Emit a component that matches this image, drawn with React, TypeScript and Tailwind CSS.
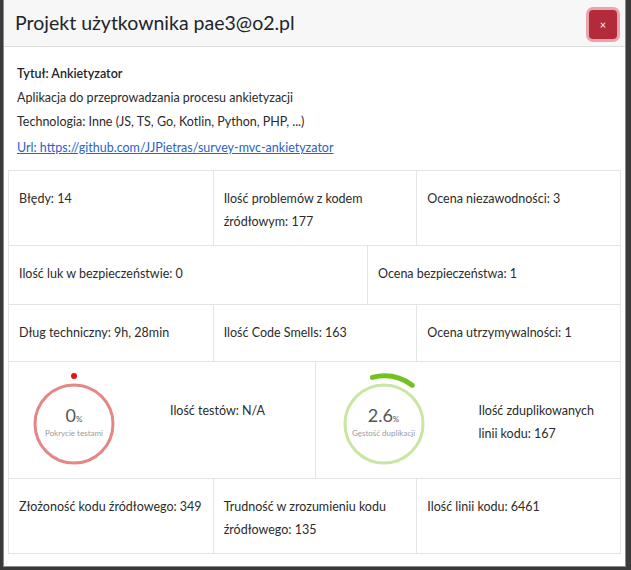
import React from "react";

type Cell = { text: string; w: string };

const rows: { h: string; cells: Cell[] }[] = [
  {
    h: "h-[75px]",
    cells: [
      { text: "Błędy: 14", w: "w-1/3" },
      { text: "Ilość problemów z kodem źródłowym: 177", w: "w-1/3" },
      { text: "Ocena niezawodności: 3", w: "w-1/3" },
    ],
  },
  {
    h: "h-[59px]",
    cells: [
      { text: "Ilość luk w bezpieczeństwie: 0", w: "w-[358px]" },
      { text: "Ocena bezpieczeństwa: 1", w: "flex-1" },
    ],
  },
  {
    h: "h-[57px]",
    cells: [
      { text: "Dług techniczny: 9h, 28min", w: "w-1/3" },
      { text: "Ilość Code Smells: 163", w: "w-1/3" },
      { text: "Ocena utrzymywalności: 1", w: "w-1/3" },
    ],
  },
];

const lastRow: Cell[] = [
  { text: "Złożoność kodu źródłowego: 349", w: "w-1/3" },
  { text: "Trudność w zrozumieniu kodu źródłowego: 135", w: "w-1/3" },
  { text: "Ilość linii kodu: 6461", w: "w-1/3" },
];

function Row({ h, cells }: { h: string; cells: Cell[] }) {
  return (
    <div className={`flex border-b border-[#e4e4e4] ${h}`}>
      {cells.map((c, i) => (
        <div
          key={i}
          className={`${c.w} pl-[10px] pr-[8px] pt-[16px] ${
            i > 0 ? "border-l border-[#e4e4e4]" : ""
          }`}
        >
          {c.text}
        </div>
      ))}
    </div>
  );
}

// arc point on a circle, angle in degrees clockwise from top
function pt(cx: number, cy: number, r: number, a: number) {
  const rad = ((a - 90) * Math.PI) / 180;
  return [cx + r * Math.cos(rad), cy + r * Math.sin(rad)];
}

function Gauge({
  value,
  label,
  ring,
  arc,
  from,
  to,
}: {
  value: string;
  label: string;
  ring: string;
  arc: string;
  from: number;
  to: number;
}) {
  const [x1, y1] = pt(55, 55, 48, from);
  const [x2, y2] = pt(55, 55, 48, to);
  return (
    <div className="relative w-[110px] h-[110px] shrink-0">
      <svg width="110" height="110" viewBox="0 0 110 110">
        <circle cx="55" cy="55" r="39" fill="none" stroke={ring} strokeWidth="3" />
        {from === to ? (
          <circle cx={x1} cy={y1} r="3" fill={arc} />
        ) : (
          <path
            d={`M ${x1} ${y1} A 48 48 0 0 1 ${x2} ${y2}`}
            fill="none"
            stroke={arc}
            strokeWidth="5"
            strokeLinecap="round"
          />
        )}
      </svg>
      <div className="absolute inset-0 flex flex-col items-center justify-center pb-[4px]">
        <div className="text-[#555] leading-[18px]">
          <span className="text-[18px]">{value}</span>
          <span className="text-[8px]">%</span>
        </div>
        <div className="text-[8px] text-[#9a9a9a] leading-[10px]">{label}</div>
      </div>
    </div>
  );
}

export default function App() {
  return (
    <div className="w-[631px] h-[570px] bg-[#3a3a3a] pl-[3px] font-[family-name:Lato,sans-serif] text-[12.5px] text-[#2b2b2b] leading-[23px]">
      <div className="w-[623px] h-[567px] bg-white border border-[#8c8c8c] border-t-0 flex flex-col">
        <div className="h-[47px] bg-[#f7f7f7] border-b border-[#dcdcdc] flex items-center justify-between pl-[11px] pr-[8px]">
          <h1 className="text-[19.5px] leading-[28px] text-[#212529]">
            Projekt użytkownika pae3@o2.pl
          </h1>
          <button className="w-[28px] h-[29px] mt-[3px] rounded-[4px] bg-[#b32a3a] ring-[3px] ring-[#eaa4ad] text-white text-[11px] leading-none flex items-center justify-center">
            ×
          </button>
        </div>

        <div className="px-[4px] pt-[15px]">
          <div className="pl-[9px] flex flex-col gap-[1px] mb-[11px]">
            <p className="font-semibold text-[#212529]">Tytuł: Ankietyzator</p>
            <p>Aplikacja do przeprowadzania procesu ankietyzacji</p>
            <p>Technologia: Inne (JS, TS, Go, Kotlin, Python, PHP, ...)</p>
            <a className="text-[#2a63c6] underline mt-[2px]" href="#">
              Url: https://github.com/JJPietras/survey-mvc-ankietyzator
            </a>
          </div>

          <div className="border-t border-l border-r border-[#e4e4e4]">
            {rows.map((r, i) => (
              <Row key={i} h={r.h} cells={r.cells} />
            ))}

            <div className="flex h-[117px] border-b border-[#e4e4e4]">
              <div className="w-1/2 flex items-start pl-[10px] pt-[7px]">
                <Gauge
                  value="0"
                  label="Pokrycie testami"
                  ring="#e38787"
                  arc="#e51010"
                  from={0}
                  to={0}
                />
                <div className="pl-[41px] pt-[30px]">Ilość testów: N/A</div>
              </div>
              <div className="w-1/2 flex items-start pl-[13px] pt-[7px] border-l border-[#e4e4e4]">
                <Gauge
                  value="2.6"
                  label="Gęstość duplikacji"
                  ring="#c9e6a2"
                  arc="#72c11f"
                  from={-14}
                  to={36}
                />
                <div className="pl-[40px] pt-[30px] w-[170px]">
                  Ilość zduplikowanych linii kodu: 167
                </div>
              </div>
            </div>

            <Row h="h-[75px]" cells={lastRow} />
          </div>
        </div>
      </div>
    </div>
  );
}
